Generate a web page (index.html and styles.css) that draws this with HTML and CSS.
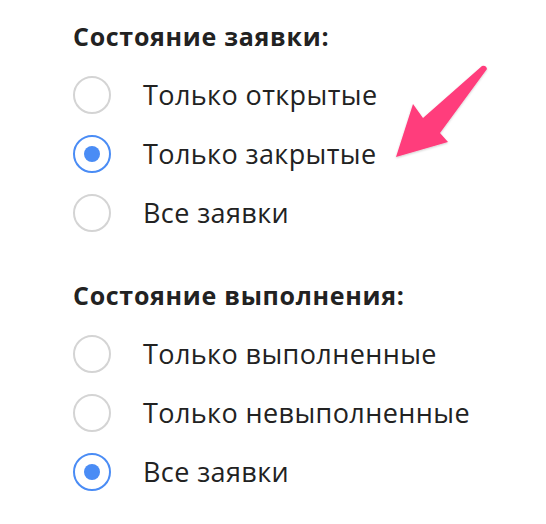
FILE: index.html
```html
<!DOCTYPE html>
<html lang="ru">
<head>
<meta charset="utf-8">
<link rel="stylesheet" href="styles.css">
</head>
<body>
<div class="page">
  <div class="group">
    <div class="title">Состояние заявки:</div>
    <label class="option"><span class="radio"></span><span class="label">Только открытые</span></label>
    <label class="option"><span class="radio checked"></span><span class="label">Только закрытые</span></label>
    <label class="option"><span class="radio"></span><span class="label">Все заявки</span></label>
  </div>
  <div class="group">
    <div class="title">Состояние выполнения:</div>
    <label class="option"><span class="radio"></span><span class="label">Только выполненные</span></label>
    <label class="option"><span class="radio"></span><span class="label">Только невыполненные</span></label>
    <label class="option"><span class="radio checked"></span><span class="label">Все заявки</span></label>
  </div>
  <svg class="arrow" width="546" height="524" viewBox="0 0 546 524">
    <defs>
      <filter id="sh" x="-20%" y="-20%" width="140%" height="140%">
        <feDropShadow dx="0" dy="1" stdDeviation="1" flood-color="#000" flood-opacity="0.2"/>
      </filter>
    </defs>
    <path filter="url(#sh)" fill="#ff3d7c" d="M482,66 Q486,65 487,69 L440,133 L448,142 L396,157 L413,104 L423,118 Z"/>
  </svg>
</div>
</body>
</html>
```
FILE: styles.css
```css
html, body {
  margin: 0;
  padding: 0;
  background: #fff;
}
.page {
  position: relative;
  width: 546px;
  height: 524px;
  padding: 6px 0 0 73px;
  box-sizing: border-box;
  font-family: "Open Sans", "Noto Sans", sans-serif;
  color: #222;
}
.group {
  display: flex;
  flex-direction: column;
}
.group + .group {
  margin-top: 23px;
}
.title {
  height: 59px;
  display: flex;
  align-items: center;
  font-size: 25px;
  font-weight: 700;
  letter-spacing: 0.7px;
}
.option {
  height: 59px;
  display: flex;
  align-items: center;
  gap: 32px;
}
.radio {
  width: 38px;
  height: 38px;
  box-sizing: border-box;
  border: 2px solid #d4d4d4;
  border-radius: 50%;
  display: flex;
  align-items: center;
  justify-content: center;
  flex: none;
}
.radio.checked {
  border-color: #4a8cf5;
}
.radio.checked::after {
  content: "";
  width: 16px;
  height: 16px;
  border-radius: 50%;
  background: #4a8cf5;
}
.label {
  font-size: 27px;
  font-weight: 400;
  letter-spacing: 0.4px;
}
.arrow {
  position: absolute;
  left: 0;
  top: 0;
  pointer-events: none;
}
```
